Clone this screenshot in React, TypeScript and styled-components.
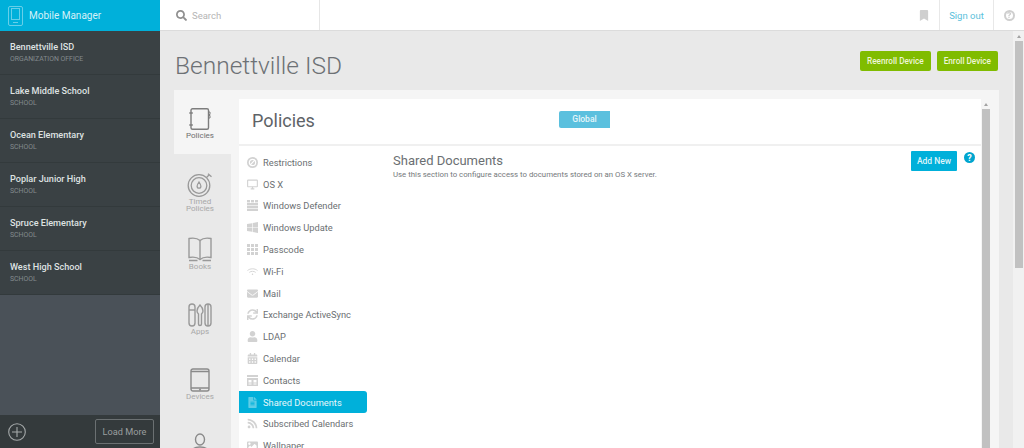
import React from "react";
import styled, { createGlobalStyle } from "styled-components";
import {
  FaCalendarAlt,
  FaEnvelope,
  FaFileAlt,
  FaImage,
  FaQuestion,
  FaRss,
  FaSearch,
  FaSync,
  FaUser,
  FaBookmark,
} from "react-icons/fa";

const GlobalStyle = createGlobalStyle`
  html, body {
    margin: 0;
    height: 100%;
    overflow: hidden;
  }
  body {
    font-family: Roboto, "Liberation Sans", sans-serif;
    background: #e9e9e9;
  }
`;

const schools = [
  { name: "Bennettville ISD", kind: "ORGANIZATION OFFICE" },
  { name: "Lake Middle School", kind: "SCHOOL" },
  { name: "Ocean Elementary", kind: "SCHOOL" },
  { name: "Poplar Junior High", kind: "SCHOOL" },
  { name: "Spruce Elementary", kind: "SCHOOL" },
  { name: "West High School", kind: "SCHOOL" },
];

const BanIcon = () => (
  <svg viewBox="0 0 11 11">
    <circle cx="5.5" cy="5.5" r="5.5" fill="currentColor" />
    <circle cx="5.5" cy="5.5" r="3.200" fill="none" stroke="#fff" strokeWidth="1.200" />
    <path d="M3.200 7.800l4.600-4.600" stroke="#fff" strokeWidth="1.200" />
  </svg>
);

const MonitorIcon = () => (
  <svg viewBox="0 0 12 11" fill="none" stroke="currentColor">
    <rect x="0.7" y="0.7" width="10.600" height="7.300" rx="0.5" strokeWidth="1.200" />
    <path d="M4 10.200h4M6 8v2" strokeWidth="1.400" />
  </svg>
);

const WallIcon = () => (
  <svg viewBox="0 0 11 11" fill="currentColor">
    <rect x="0" y="0" width="3" height="2.400" />
    <rect x="4" y="0" width="3" height="2.400" />
    <rect x="8" y="0" width="3" height="2.400" />
    <rect x="0" y="3" width="11" height="2.400" />
    <rect x="0" y="6" width="11" height="2.200" />
    <rect x="0" y="8.800" width="11" height="2.200" />
  </svg>
);

const FlagIcon = () => (
  <svg viewBox="0 0 11 11" fill="currentColor">
    <path d="M0 2l5-.8v4H0zM5.600 1.100L11 0v5.200H5.600zM0 5.800h5v4L0 9zM5.600 5.800H11V11l-5.400-1.100z" />
  </svg>
);

const GridIcon = () => (
  <svg viewBox="0 0 11 11" fill="currentColor">
    {[0, 4, 8].map((y) =>
      [0, 4, 8].map((x) => (
        <rect key={`${x}-${y}`} x={x} y={y} width="3" height="3" />
      ))
    )}
  </svg>
);

const WifiIcon = () => (
  <svg viewBox="0 0 12 11" fill="none" stroke="currentColor" strokeWidth="1">
    <path d="M0.5 4.500c3-2.600 8-2.600 11 0M2.500 6.500c2-1.600 5-1.600 7 0" />
    <circle cx="6" cy="8.500" r="0.8" fill="currentColor" stroke="none" />
  </svg>
);

const ContactsIcon = () => (
  <svg viewBox="0 0 11 11" fill="currentColor">
    <rect x="0" y="0" width="11" height="2" />
    <path
      d="M0 3h11v8H0z M1.500 5v2.500h3V5z M6.500 5v2.500h3V5z M1.500 8.500v1h3v-1z M6.500 8.500v1h3v-1z"
      fillRule="evenodd"
    />
  </svg>
);

const policies: { label: string; icon: React.ReactNode }[] = [
  { label: "Restrictions", icon: <BanIcon /> },
  { label: "OS X", icon: <MonitorIcon /> },
  { label: "Windows Defender", icon: <WallIcon /> },
  { label: "Windows Update", icon: <FlagIcon /> },
  { label: "Passcode", icon: <GridIcon /> },
  { label: "Wi-Fi", icon: <WifiIcon /> },
  { label: "Mail", icon: <FaEnvelope /> },
  { label: "Exchange ActiveSync", icon: <FaSync /> },
  { label: "LDAP", icon: <FaUser /> },
  { label: "Calendar", icon: <FaCalendarAlt /> },
  { label: "Contacts", icon: <ContactsIcon /> },
  { label: "Shared Documents", icon: <FaFileAlt /> },
  { label: "Subscribed Calendars", icon: <FaRss /> },
  { label: "Wallpaper", icon: <FaImage /> },
];

const NotebookIcon = () => (
  <svg width="22" height="22" viewBox="0 0 22 22" fill="none" stroke="#7d7d7d" strokeWidth="1.4">
    <rect x="2" y="0.8" width="17.500" height="20.400" rx="1.500" />
    <path d="M0.300 5h3.500M0.300 17h3.500" />
    <path d="M19 4h2v2.500h-2M19 7.500h2V10h-2" strokeWidth="1" />
  </svg>
);

const TimerIcon = () => (
  <svg width="26" height="24" viewBox="0 0 26 24" fill="none" stroke="#999" strokeWidth="1.3">
    <circle cx="12" cy="12.500" r="10.800" />
    <circle cx="12" cy="12.500" r="7.800" />
    <path d="M12 9c-1.500 2.200-1.900 3.300-1.900 4.200a1.900 1.900 0 0 0 3.800 0c0-.9-.4-2-1.900-4.200z" />
    <path d="M19.500 4.500l3-3M21 0.800l3.500 3" />
  </svg>
);

const BookIcon = () => (
  <svg width="24" height="25" viewBox="0 0 24 25" fill="none" stroke="#999" strokeWidth="1.4">
    <path d="M12 3.500C9.500 1.200 5 .8 1 1.500v19c4-.7 8.500-.3 11 2 2.500-2.300 7-2.700 11-2v-19c-4-.7-8.500-.3-11 2z" />
    <path d="M12 3.500v19M1 23.500h8.500M14.500 23.500H23" />
  </svg>
);

const AppsIcon = () => (
  <svg width="24" height="24" viewBox="0 0 24 24" fill="none" stroke="#999" strokeWidth="1.4">
    <rect x="1" y="1" width="6" height="22" rx="3" />
    <path d="M1 7h6" />
    <path d="M12 2c-2 2-3 4-3 6 0 1.500 1 2.500 1.500 3v10a1.500 1.500 0 0 0 3 0V11c.5-.5 1.500-1.500 1.500-3 0-2-1-4-3-6z" />
    <rect x="17" y="1" width="6" height="22" rx="3" />
    <path d="M20 1v22" />
  </svg>
);

const TabletIcon = () => (
  <svg width="20" height="24" viewBox="0 0 20 24" fill="none" stroke="#8a8a8a" strokeWidth="1.4">
    <rect x="1" y="1" width="18" height="22" rx="2" />
    <path d="M1 3.500h18M1 20h18" />
    <circle cx="10" cy="21.600" r="0.4" />
  </svg>
);

const PersonIcon = () => (
  <svg width="20" height="24" viewBox="0 0 20 24" fill="none" stroke="#8a8a8a" strokeWidth="1.4">
    <ellipse cx="10" cy="6.500" rx="4.500" ry="5.500" />
    <path d="M2 23v-4c0-3 3-5 8-5s8 2 8 5v4z" />
  </svg>
);

const tabs: { id: string; label?: string; icon: React.ReactNode; active?: boolean }[] = [
  { id: "policies", label: "Policies", icon: <NotebookIcon />, active: true },
  { id: "timed", label: "Timed Policies", icon: <TimerIcon /> },
  { id: "books", label: "Books", icon: <BookIcon /> },
  { id: "apps", label: "Apps", icon: <AppsIcon /> },
  { id: "devices", label: "Devices", icon: <TabletIcon /> },
  { id: "person", icon: <PersonIcon /> },
];

const App: React.FC = () => (
  <>
    <GlobalStyle />
    <Page>
      <Header>
        <Brand>
          <svg width="15" height="20" viewBox="0 0 15 20" fill="none" stroke="rgba(255,255,255,0.4)" strokeWidth="1">
            <rect x="0.5" y="0.5" width="14" height="19" rx="1.500" />
            <rect x="3.500" y="2.500" width="8" height="11" />
            <path d="M5 16.500h5" />
          </svg>
          Mobile Manager
        </Brand>
        <SearchBox>
          <FaSearch />
          Search
        </SearchBox>
        <HeaderSpacer />
        <BookmarkCell>
          <FaBookmark />
        </BookmarkCell>
        <SignOut>Sign out</SignOut>
        <HelpCell>
          <HelpRing>
            <FaQuestion />
          </HelpRing>
        </HelpCell>
      </Header>
      <Body>
        <Sidebar>
          <SchoolList>
            {schools.map((school) => (
              <School key={school.name}>
                <SchoolName>{school.name}</SchoolName>
                <SchoolKind>{school.kind}</SchoolKind>
              </School>
            ))}
          </SchoolList>
          <SidebarFooter>
            <svg width="18" height="18" viewBox="0 0 18 18" fill="none" stroke="#a5a9aa" strokeWidth="1.100">
              <circle cx="9" cy="9" r="8.300" />
              <path d="M9 4v10M4 9h10" />
            </svg>
            <LoadMore>Load More</LoadMore>
          </SidebarFooter>
        </Sidebar>
        <Main>
          <TitleRow>
            <PageTitle>Bennettville ISD</PageTitle>
            <Actions>
              <GreenButton>Reenroll Device</GreenButton>
              <GreenButton>Enroll Device</GreenButton>
            </Actions>
          </TitleRow>
          <Panel>
            <Rail>
              {tabs.map((tab) => (
                <RailTab key={tab.id} $active={tab.active}>
                  <RailIcon>{tab.icon}</RailIcon>
                  {tab.label && <RailLabel $active={tab.active}>{tab.label}</RailLabel>}
                </RailTab>
              ))}
            </Rail>
            <Card>
              <CardBody>
                <CardHeader>
                  <CardTitle>Policies</CardTitle>
                  <GlobalTab>Global</GlobalTab>
                </CardHeader>
                <CardColumns>
                  <PolicyMenu>
                    {policies.map((item) => (
                      <PolicyItem key={item.label} $active={item.label === "Shared Documents"}>
                        <PolicyIcon $active={item.label === "Shared Documents"}>{item.icon}</PolicyIcon>
                        {item.label}
                      </PolicyItem>
                    ))}
                  </PolicyMenu>
                  <Detail>
                    <DetailText>
                      <DetailTitle>Shared Documents</DetailTitle>
                      <DetailHint>
                        Use this section to configure access to documents stored on an OS X server.
                      </DetailHint>
                    </DetailText>
                    <AddNew>Add New</AddNew>
                    <HelpDot>?</HelpDot>
                  </Detail>
                </CardColumns>
              </CardBody>
              <ScrollTrack>
                <ScrollArrow />
                <ScrollThumb />
              </ScrollTrack>
            </Card>
          </Panel>
        </Main>
        <PageScroll>
          <ScrollArrow />
          <PageThumb />
        </PageScroll>
      </Body>
    </Page>
  </>
);

const Page = styled.div`
  display: flex;
  flex-direction: column;
  height: 448px;
  overflow: hidden;
`;

const Header = styled.header`
  display: flex;
  flex: none;
  height: 30px;
  background: #fff;
  border-bottom: 1px solid #dcdcdc;
`;

const Brand = styled.div`
  display: flex;
  align-items: center;
  gap: 6px;
  width: 152px;
  padding-left: 8px;
  height: 31px;
  background: #00b0da;
  color: #d6f1f8;
  font-size: 10px;
`;

const SearchBox = styled.div`
  display: flex;
  align-items: center;
  gap: 5px;
  width: 143px;
  padding-left: 16px;
  border-right: 1px solid #e6e6e6;
  color: #b5b5b5;
  font-size: 9.500px;

  svg {
    width: 11px;
    height: 11px;
    color: #8f8f8f;
  }
`;

const HeaderSpacer = styled.div`
  flex: 1;
`;

const BookmarkCell = styled.div`
  display: flex;
  align-items: center;
  width: 20px;
  color: #cfcfcf;

  svg {
    width: 10px;
    height: 11px;
  }
`;

const SignOut = styled.div`
  display: flex;
  align-items: center;
  justify-content: center;
  width: 53px;
  border-left: 1px solid #e8e8e8;
  border-right: 1px solid #e8e8e8;
  color: #5bbfdc;
  font-size: 9.500px;
`;

const HelpCell = styled.div`
  display: flex;
  align-items: center;
  justify-content: center;
  width: 30px;
`;

const HelpRing = styled.div`
  display: flex;
  align-items: center;
  justify-content: center;
  width: 7px;
  height: 7px;
  border: 2px solid #cfcfcf;
  border-radius: 50%;
  color: #cfcfcf;

  svg {
    width: 6px;
    height: 6px;
  }
`;

const Body = styled.div`
  display: flex;
  flex: 1;
  min-height: 0;
`;

const Sidebar = styled.aside`
  display: flex;
  flex-direction: column;
  flex: none;
  width: 160px;
  background: #4a5158;
`;

const SchoolList = styled.div`
  flex: 1;
`;

const School = styled.div`
  box-sizing: border-box;
  height: 44px;
  padding: 10px 0 0 10px;
  background: #3a4144;
  border-bottom: 1px solid #333a3c;
`;

const SchoolName = styled.div`
  color: #dfe2e2;
  font-size: 9.100px;
  font-weight: 500;
  line-height: 12px;
`;

const SchoolKind = styled.div`
  margin-top: 1px;
  color: #848b8e;
  font-size: 6.900px;
  line-height: 11px;
`;

const SidebarFooter = styled.div`
  display: flex;
  flex: none;
  align-items: center;
  justify-content: space-between;
  box-sizing: border-box;
  height: 33px;
  padding: 0 6px 0 8px;
  background: #343a3c;
`;

const LoadMore = styled.div`
  display: flex;
  align-items: center;
  justify-content: center;
  box-sizing: border-box;
  width: 59px;
  height: 25px;
  border: 1px solid #6b7072;
  border-radius: 2px;
  color: #9a9e9f;
  font-size: 9.200px;
`;

const Main = styled.main`
  flex: 1;
  min-width: 0;
  padding: 0 14px;
`;

const TitleRow = styled.div`
  display: flex;
  align-items: center;
  justify-content: space-between;
  height: 59px;
  padding-right: 1px;
`;

const PageTitle = styled.h1`
  margin: 9px 0 0 1px;
  color: #6d7175;
  font-size: 24.500px;
  font-weight: 300;
`;

const Actions = styled.div`
  display: flex;
  gap: 6px;
`;

const GreenButton = styled.div`
  display: flex;
  align-items: center;
  padding: 0 7px;
  height: 20px;
  background: #80bc00;
  border-radius: 2px;
  color: #eef6d8;
  font-size: 8.200px;
  font-weight: 500;
`;

const Panel = styled.section`
  display: flex;
  height: 358px;
  padding-right: 8px;
  background: #f5f5f5;
`;

const Rail = styled.nav`
  flex: none;
  width: 57px;
  margin-right: 8px;
  background: #e9e9e9;
`;

const RailTab = styled.div<{ $active?: boolean }>`
  display: flex;
  flex-direction: column;
  align-items: center;
  box-sizing: border-box;
  height: ${({ $active }) => ($active ? "64px" : "65px")};
  padding: ${({ $active }) => ($active ? "16px" : "18px")} 5px 0 0;
  background: ${({ $active }) => ($active ? "#f5f5f5" : "#e9e9e9")};
`;

const RailIcon = styled.div`
  display: flex;
  align-items: center;
  justify-content: center;
  height: 25px;
`;

const RailLabel = styled.div<{ $active?: boolean }>`
  margin-top: 2px;
  width: 40px;
  color: ${({ $active }) => ($active ? "#6f6f6f" : "#a8a8a8")};
  font-size: 8px;
  line-height: 6.500px;
  text-align: center;
`;

const Card = styled.div`
  display: flex;
  flex: 1;
  min-width: 0;
  margin-top: 9px;
  background: #fff;
`;

const CardBody = styled.div`
  flex: 1;
  min-width: 0;
`;

const CardHeader = styled.div`
  display: flex;
  align-items: center;
  box-sizing: border-box;
  height: 47px;
  padding-left: 13px;
  border-bottom: 2px solid #f0f0f0;
`;

const CardTitle = styled.h2`
  width: 307px;
  margin: 0 0 2px;
  color: #5e6367;
  font-size: 18px;
  font-weight: 400;
`;

const GlobalTab = styled.div`
  display: flex;
  align-items: center;
  justify-content: center;
  width: 51px;
  height: 17px;
  margin-top: -5px;
  background: #5bc0de;
  border-radius: 2px 0 0 2px;
  color: #e6f6fa;
  font-size: 8.500px;
  font-weight: 500;
`;

const CardColumns = styled.div`
  display: flex;
`;

const PolicyMenu = styled.ul`
  flex: none;
  width: 128px;
  margin: 5px 0 0;
  padding: 0;
  list-style: none;
`;

const PolicyItem = styled.li<{ $active?: boolean }>`
  display: flex;
  align-items: center;
  gap: 5px;
  box-sizing: border-box;
  height: 21.800px;
  padding: 1px 0 0 8px;
  border-radius: 0 3px 3px 0;
  background: ${({ $active }) => ($active ? "#00b0da" : "transparent")};
  color: ${({ $active }) => ($active ? "#e6f7fb" : "#6b6f72")};
  font-size: 9.300px;
`;

const PolicyIcon = styled.span<{ $active?: boolean }>`
  display: flex;
  align-items: center;
  justify-content: center;
  width: 11px;
  color: ${({ $active }) => ($active ? "#5fcde6" : "#d2d2d2")};

  svg {
    width: 11px;
    height: 11px;
  }
`;

const Detail = styled.div`
  display: flex;
  flex: 1;
  align-items: flex-start;
  min-width: 0;
  padding: 5px 6px 0 26px;
`;

const DetailText = styled.div`
  flex: 1;
  min-width: 0;
  padding-top: 2px;
`;

const DetailTitle = styled.div`
  color: #6b6f72;
  font-size: 13px;
  line-height: 15px;
`;

const DetailHint = styled.div`
  margin-top: 2px;
  color: #75797c;
  font-size: 7.800px;
  line-height: 10px;
  white-space: nowrap;
`;

const AddNew = styled.div`
  display: flex;
  align-items: center;
  justify-content: center;
  width: 46px;
  height: 20px;
  background: #00b0da;
  border-radius: 1px;
  color: #dff5fa;
  font-size: 8.500px;
  font-weight: 500;
`;

const HelpDot = styled.div`
  display: flex;
  align-items: center;
  justify-content: center;
  width: 11px;
  height: 11px;
  margin: 1px 0 0 7px;
  background: #00a5cf;
  border-radius: 50%;
  color: #fff;
  font-size: 9px;
  font-weight: 700;
`;

const ScrollTrack = styled.div`
  display: flex;
  flex: none;
  flex-direction: column;
  width: 10px;
  background: #f5f5f5;
`;

const ScrollArrow = styled.div`
  flex: none;
  height: 10px;
  position: relative;

  &::after {
    content: "";
    position: absolute;
    left: 50%;
    top: 4px;
    margin-left: -2px;
    border: 2px solid transparent;
    border-top: 0;
    border-bottom: 3px solid #a3a3a3;
  }
`;

const ScrollThumb = styled.div`
  flex: 1;
  margin: 0 1px;
  background: #c1c1c1;
`;

const PageScroll = styled.div`
  display: flex;
  flex: none;
  flex-direction: column;
  width: 11px;
  background: #f1f1f1;
`;

const PageThumb = styled.div`
  flex: none;
  height: 227px;
  margin: 0 1px 0 2px;
  background: #c1c1c1;
`;

export default App;
